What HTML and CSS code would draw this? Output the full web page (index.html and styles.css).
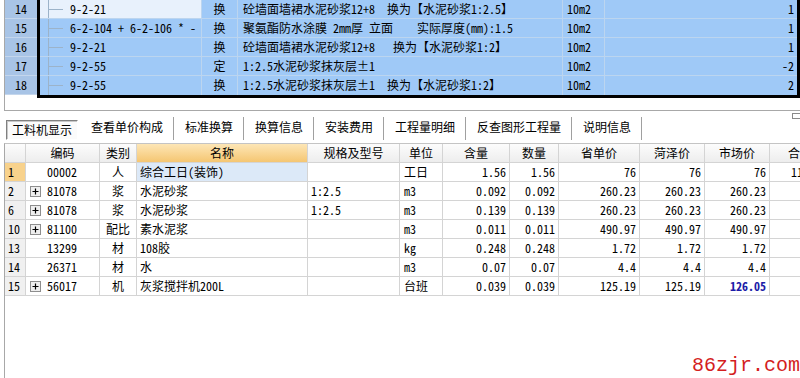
FILE: index.html
```html
<!DOCTYPE html>
<html lang="zh-CN">
<head>
    <meta charset="UTF-8">
    <title>工料机显示</title>
    <link rel="stylesheet" href="styles.css">
</head>
<body>
    <div class="top-panel">
        <div class="bill-nums">
            <div>14</div>
            <div>15</div>
            <div>16</div>
            <div>17</div>
            <div>18</div>
        </div>
        <div class="bill">
            <div class="bill-row">
                <span class="tree current">9-2-21</span><span class="c">换</span><span>砼墙面墙裙水泥砂浆12+8  换为【水泥砂浆1:2.5】</span><span>10m2</span><span class="r">1</span>
            </div>
            <div class="bill-row">
                <span class="tree">6-2-104 + 6-2-106 * -</span><span class="c">换</span><span>聚氨酯防水涂膜 2mm厚 立面    实际厚度(mm):1.5</span><span>10m2</span><span class="r">1</span>
            </div>
            <div class="bill-row">
                <span class="tree">9-2-21</span><span class="c">换</span><span>砼墙面墙裙水泥砂浆12+8   换为【水泥砂浆1:2】</span><span>10m2</span><span class="r">1</span>
            </div>
            <div class="bill-row">
                <span class="tree">9-2-55</span><span class="c">定</span><span>1:2.5水泥砂浆抹灰层±1</span><span>10m2</span><span class="r">-2</span>
            </div>
            <div class="bill-row">
                <span class="tree">9-2-55</span><span class="c">换</span><span>1:2.5水泥砂浆抹灰层±1  换为【水泥砂浆1:2】</span><span>10m2</span><span class="r">2</span>
            </div>
        </div>
    </div>

    <div class="tabs">
        <span class="tab active">工料机显示</span>
        <span class="tab">查看单价构成</span>
        <span class="tab">标准换算</span>
        <span class="tab">换算信息</span>
        <span class="tab">安装费用</span>
        <span class="tab">工程量明细</span>
        <span class="tab">反查图形工程量</span>
        <span class="tab">说明信息</span>
        <span class="restore"></span>
    </div>

    <div class="grid">
        <div class="grid-row head">
            <span></span><span>编码</span><span>类别</span><span class="sorted">名称</span><span>规格及型号</span><span>单位</span><span>含量</span><span>数量</span><span>省单价</span><span>菏泽价</span><span>市场价</span><span>合价</span>
        </div>
        <div class="grid-row selected">
            <span class="no">1</span><span class="code leaf">00002</span><span class="c">人</span><span class="name">综合工日(装饰)</span><span></span><span class="unit">工日</span><span class="r">1.56</span><span class="r">1.56</span><span class="r">76</span><span class="r">76</span><span class="r">76</span><span class="r">118.56</span>
        </div>
        <div class="grid-row">
            <span class="no">2</span><span class="code"><svg class="exp" width="11" height="11" viewBox="0 0 11 11"><rect x="0.5" y="0.5" width="10" height="10" fill="#efefef" stroke="#8e8e8e"/><path d="M2.5 5.5h6M5.5 2.5v6" stroke="#000" stroke-width="1.2"/></svg>81078</span><span class="c">浆</span><span class="name">水泥砂浆</span><span class="spec">1:2.5</span><span class="unit">m3</span><span class="r">0.092</span><span class="r">0.092</span><span class="r">260.23</span><span class="r">260.23</span><span class="r">260.23</span><span></span>
        </div>
        <div class="grid-row">
            <span class="no">6</span><span class="code"><svg class="exp" width="11" height="11" viewBox="0 0 11 11"><rect x="0.5" y="0.5" width="10" height="10" fill="#efefef" stroke="#8e8e8e"/><path d="M2.5 5.5h6M5.5 2.5v6" stroke="#000" stroke-width="1.2"/></svg>81078</span><span class="c">浆</span><span class="name">水泥砂浆</span><span class="spec">1:2.5</span><span class="unit">m3</span><span class="r">0.139</span><span class="r">0.139</span><span class="r">260.23</span><span class="r">260.23</span><span class="r">260.23</span><span></span>
        </div>
        <div class="grid-row">
            <span class="no">10</span><span class="code"><svg class="exp" width="11" height="11" viewBox="0 0 11 11"><rect x="0.5" y="0.5" width="10" height="10" fill="#efefef" stroke="#8e8e8e"/><path d="M2.5 5.5h6M5.5 2.5v6" stroke="#000" stroke-width="1.2"/></svg>81100</span><span class="c">配比</span><span class="name">素水泥浆</span><span></span><span class="unit">m3</span><span class="r">0.011</span><span class="r">0.011</span><span class="r">490.97</span><span class="r">490.97</span><span class="r">490.97</span><span></span>
        </div>
        <div class="grid-row">
            <span class="no">13</span><span class="code leaf">13299</span><span class="c">材</span><span class="name">108胶</span><span></span><span class="unit">kg</span><span class="r">0.248</span><span class="r">0.248</span><span class="r">1.72</span><span class="r">1.72</span><span class="r">1.72</span><span></span>
        </div>
        <div class="grid-row">
            <span class="no">14</span><span class="code leaf">26371</span><span class="c">材</span><span class="name">水</span><span></span><span class="unit">m3</span><span class="r">0.07</span><span class="r">0.07</span><span class="r">4.4</span><span class="r">4.4</span><span class="r">4.4</span><span></span>
        </div>
        <div class="grid-row">
            <span class="no">15</span><span class="code"><svg class="exp" width="11" height="11" viewBox="0 0 11 11"><rect x="0.5" y="0.5" width="10" height="10" fill="#efefef" stroke="#8e8e8e"/><path d="M2.5 5.5h6M5.5 2.5v6" stroke="#000" stroke-width="1.2"/></svg>56017</span><span class="c">机</span><span class="name">灰浆搅拌机200L</span><span></span><span class="unit">台班</span><span class="r">0.039</span><span class="r">0.039</span><span class="r">125.19</span><span class="r">125.19</span><span class="r changed">126.05</span><span></span>
        </div>
    </div>

    <div class="watermark">86zjr.com</div>
</body>
</html>
```

FILE: styles.css
```css
body {
    margin: 0;
    width: 800px;
    height: 378px;
    overflow: hidden;
    position: relative;
    background: #fff;
    color: #000;
    font-family: "Noto Sans Mono CJK SC", "Noto Sans CJK SC", "DejaVu Sans Mono", monospace;
    font-size: 12px;
}

/* upper bill grid */
.top-panel {
    margin-left: 4px;
    height: 110px;
    border-left: 1px solid #a8a8a8;
    border-bottom: 1px solid #a8a8a8;
    display: flex;
    align-items: flex-start;
}

.bill-nums {
    width: 32px;
    background: #a8c4e6;
}

.bill-nums div {
    height: 19px;
    line-height: 18px;
    box-sizing: border-box;
    border-bottom: 1px solid #c4d6ec;
    text-align: center;
}

.bill {
    flex: 1;
    border: 3px solid #000;
    border-top: none;
    background: #9fc9f7;
}

.bill-row {
    display: grid;
    grid-template-columns: 162px 36px 325px 42px 192px;
    height: 19px;
}

.bill-row span {
    box-sizing: border-box;
    border-right: 1px solid #bcd5ef;
    border-bottom: 1px solid #bcd5ef;
    line-height: 18px;
    padding: 0 3px 0 5px;
    white-space: pre;
    overflow: hidden;
}

.bill-row span:nth-child(4) {
    padding-left: 4px;
}

.bill-row span:last-child {
    border-right: none;
}

.bill-row:last-child span {
    border-bottom: none;
}

.bill-row .tree {
    padding-left: 30px;
    background-image: linear-gradient(#9cb3c9, #9cb3c9), linear-gradient(#9cb3c9, #9cb3c9);
    background-size: 1px 100%, 15px 1px;
    background-position: 8px 0, 8px 9px;
    background-repeat: no-repeat;
}

.bill-row .tree.current {
    background-color: #e8f1fc;
}

.c {
    text-align: center;
}

.r {
    text-align: right;
}

.bill-row .c {
    padding: 0;
}

/* tab strip */
.tabs {
    height: 32px;
    box-sizing: border-box;
    padding: 0 0 3px 6px;
    display: flex;
    align-items: flex-end;
    font-family: "Noto Sans CJK SC", sans-serif;
    font-size: 12px;
}

.tab {
    padding: 0 10px;
    height: 23px;
    line-height: 20px;
    border-right: 1px solid #a0a0a0;
    box-shadow: 1px 0 0 #fff;
    margin-right: 1px;
}

.tab.active {
    height: 20px;
    line-height: 18px;
    padding: 0 5px;
    box-sizing: border-box;
    border: 1px solid;
    border-color: #808080 #fff #fff #808080;
    box-shadow: inset 1px 1px 0 #c8c8c8;
    background: #fbfbfb;
    margin-right: 3px;
}

.restore {
    margin-left: auto;
    align-self: flex-start;
    margin-top: 2px;
    width: 7px;
    height: 4px;
    border: 1px solid #8a8a8a;
    border-right: none;
}

/* lower resource grid */
.grid {
    margin-left: 4px;
    height: 235px;
    border-left: 1px solid #a8a8a8;
    border-top: 1px solid #c4c4c4;
    overflow: hidden;
}

.grid-row {
    display: grid;
    grid-template-columns: 21px 74px 37px 171px 92px 43px 67px 49px 81px 65px 65px 61px;
    width: max-content;
    height: 19px;
}

.grid-row span {
    box-sizing: border-box;
    border-right: 1px solid #d4d4d4;
    border-bottom: 1px solid #d4d4d4;
    line-height: 18px;
    padding: 0 3px;
    white-space: nowrap;
    overflow: hidden;
}

.grid-row.head span {
    background: linear-gradient(#fcfcfc, #ededed);
    text-align: center;
    font-family: "Noto Sans CJK SC", sans-serif;
}

.grid-row.head .sorted {
    background: linear-gradient(#fde6b6, #f5c672);
}

.grid-row .no {
    background: #f0f0f0;
    padding-left: 3px;
}

.grid-row.selected .no {
    background: #f8d28c;
}

.grid-row.selected .name {
    background: #dce9f8;
}

.grid-row .code {
    padding-left: 4px;
}

.grid-row .code.leaf {
    padding-left: 21px;
}

.exp {
    vertical-align: -1px;
    margin-right: 6px;
}

.grid-row .unit {
    padding-left: 4px;
}

.grid-row .changed {
    color: #1c1ca8;
    font-weight: bold;
}

.watermark {
    position: absolute;
    right: 0;
    bottom: 1px;
    font-family: "Liberation Mono", monospace;
    font-size: 20px;
    line-height: 22px;
    color: #d41e1e;
}
```
